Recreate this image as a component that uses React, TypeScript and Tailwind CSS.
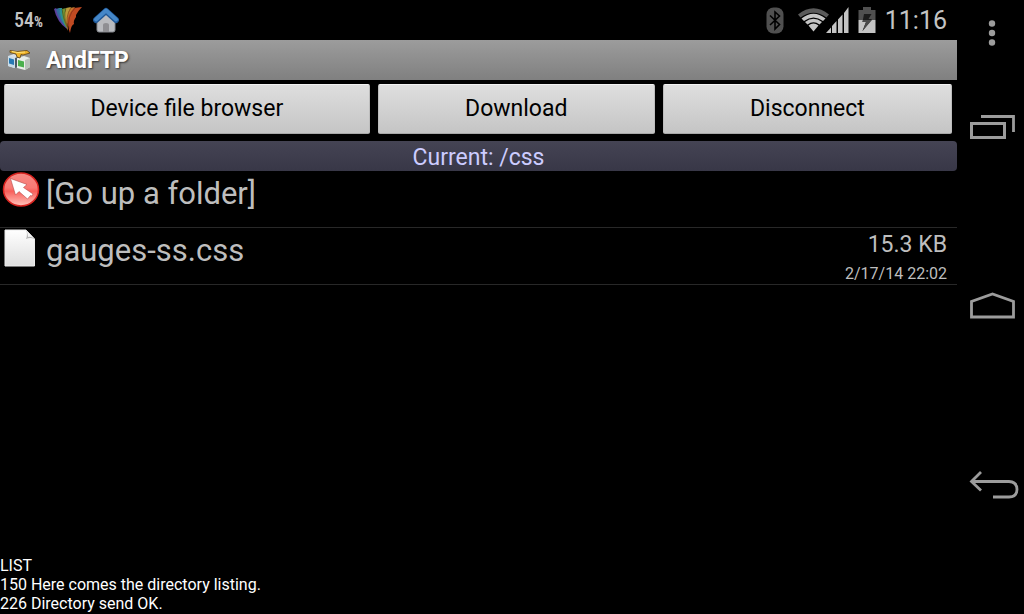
import type { ReactNode } from "react";

function BirdIcon() {
  return (
    <svg width="28" height="27" viewBox="0 0 28 27" aria-hidden="true">
      <path d="M0 2 L2 1 Q7 9 13 20 L13 22 Q3 15 0 2Z" fill="#5c3f9c" />
      <path d="M2 2 L5 1 Q8 9 13 20 L11 19 Q4 12 2 2Z" fill="#35699f" />
      <path d="M5 1 L8 1 Q9 10 13 21 L11 19 Q6 11 5 1Z" fill="#2b8f92" />
      <path d="M8 2 L12 1 Q10 11 14 22 L12 20 Q8 11 8 2Z" fill="#6f9434" />
      <path d="M12 1 L17 0 Q11 10 14 23 L13 21 Q9 11 12 1Z" fill="#b99b3a" />
      <path d="M16 1 L21 0 Q12 10 14 24 L13 21 Q11 9 16 1Z" fill="#c8782c" />
      <path d="M20 1 L28 0 Q24 4 22 8 L22 10 Q19 14 20 17 Q17 18 16 26 Q10 10 20 1Z" fill="#c04a22" />
      <path d="M8 2 Q9 11 13 20 M12 1 Q9 10 14 21 M17 1 Q11 9 14 22 M21 1 Q13 9 15 22" fill="none" stroke="#1a1208" strokeOpacity="0.5" strokeWidth="0.6" />
    </svg>
  );
}

function HouseIcon() {
  return (
    <svg width="26" height="26" viewBox="0 0 26 26" aria-hidden="true">
      <path d="M4 12 L13 4 L22 12 V23 Q22 25 20 25 H6 Q4 25 4 23Z" fill="#b9bbbf" stroke="#85888e" />
      <path d="M10 25 V18 Q10 16 13 16 Q16 16 16 18 V25Z" fill="#8f8f93" />
      <path d="M3 13 L13 4 L23 13" fill="none" stroke="#1f5796" strokeWidth="6" strokeLinecap="round" strokeLinejoin="round" />
      <path d="M3 12.5 L13 3.5 L23 12.5" fill="none" stroke="#4587c8" strokeWidth="4" strokeLinecap="round" strokeLinejoin="round" />
    </svg>
  );
}

function BluetoothIcon() {
  return (
    <svg width="18" height="27" viewBox="0 0 18 27" aria-hidden="true">
      <rect x="0.5" y="0.5" width="17" height="26" rx="7" fill="#505050" />
      <path d="M4 8.5 L13.5 17.5 L9 22 V5 L13.5 9 L4 18" fill="none" stroke="#000" strokeWidth="1.6" />
    </svg>
  );
}

function WifiIcon() {
  return (
    <svg width="32" height="24" viewBox="0 0 32 24" aria-hidden="true">
      <path d="M0 6.5 Q15.5 -6 31 6.5 L28.5 9.5 Q15.5 0 2.5 9.5Z" fill="#5a5a5a" />
      <path d="M3.5 10.5 Q15.5 1 27.5 10.5 L25 13 Q15.5 6 6 13Z" fill="#c4c4c4" />
      <path d="M7 14 Q15.5 7.5 24 14 L21.5 16.5 Q15.5 12 9.5 16.5Z" fill="#c4c4c4" />
      <path d="M10.5 17.5 Q15.5 13.5 20.5 17.5 L15.5 23.5Z" fill="#c4c4c4" />
    </svg>
  );
}

function SignalIcon() {
  return (
    <svg width="23" height="26" viewBox="0 0 23 26" aria-hidden="true">
      <path d="M0 26 L5 20.500 V26Z M6 26 V19 L10.500 14 V26Z M12 26 V12.500 L16.500 7.500 V26Z M18 26 V6 L22.500 0 V26Z" fill="#c4c4c4" />
    </svg>
  );
}

function BatteryIcon() {
  return (
    <svg width="18" height="26" viewBox="0 0 18 26" aria-hidden="true">
      <path d="M5 0 H13 V3 H17.500 V13 H0.500 V3 H5Z" fill="#505050" />
      <path d="M0.500 13 H17.500 V26 H0.500Z" fill="#c4c4c4" />
      <path d="M6 7 L13.500 7 L10.500 12 H14 L4.500 24 L8 15 H4.500Z" fill="#1c1c1c" />
      <path d="M9 13 H14 L4.500 24 L8 15 H4.500 L5 13Z" fill="#4a4a4a" />
    </svg>
  );
}

function AndFtpIcon() {
  return (
    <svg width="24" height="22" viewBox="0 0 24 22" aria-hidden="true">
      <path d="M1 7 L7 5 L13 7 V17 L7 19 L1 17Z" fill="#d9e0e6" />
      <path d="M1 7 L8 9 V19 L1 17Z" fill="#c9dce8" />
      <path d="M2 9 L7 10.5 V16 L2 14.5Z" fill="#2779b4" />
      <path d="M8 9 L13 7 V17 L8 19Z" fill="#4d5a64" />
      <path d="M10 9 L17 7 L23 9 V18 L18 21 L10 19Z" fill="#e8eee8" />
      <path d="M18 11 L23 9 V18 L18 21Z" fill="#b9c1bb" />
      <path d="M11 11 L17 12.5 V18.5 L11 17Z" fill="#49b04d" />
      <path d="M3 1.500 L10 2.500 L20 1.500 L23 4 L16 6 L14 5.500 L13 9 L10 8 L9 5 L3 3.500Z" fill="#f0b429" stroke="#5e430f" strokeWidth="0.8" />
      <path d="M5 2.500 L11 3.500 L18 3" fill="none" stroke="#ffe37a" />
    </svg>
  );
}

function GoUpIcon() {
  return (
    <svg width="38" height="36" viewBox="0 0 38 36" aria-hidden="true">
      <defs>
        <linearGradient id="ball" x1="0" y1="0" x2="0" y2="1">
          <stop offset="0" stopColor="#f58a84" />
          <stop offset="0.45" stopColor="#f87974" />
          <stop offset="0.55" stopColor="#f85f5a" />
          <stop offset="1" stopColor="#ffc4bc" />
        </linearGradient>
      </defs>
      <ellipse cx="19" cy="17.5" rx="17.5" ry="16.5" fill="url(#ball)" stroke="#d92420" strokeWidth="1.5" />
      <path d="M8.5 6.5 L25 12.500 L21.5 15.500 L31 22 L30 24 L28.500 23.500 L25.500 27 L17 19.500 L13.5 23Z" fill="#fff" stroke="#a83a38" strokeWidth="0.5" />
    </svg>
  );
}

function FileIcon() {
  return (
    <svg width="32" height="38" viewBox="0 0 32 38" aria-hidden="true">
      <defs>
        <linearGradient id="sheet" x1="0" y1="0" x2="0" y2="1">
          <stop offset="0" stopColor="#fff" />
          <stop offset="1" stopColor="#dedede" />
        </linearGradient>
      </defs>
      <path d="M1 1 H22 L30.5 10 V37 H1Z" fill="url(#sheet)" stroke="#ececec" />
      <path d="M22 1 L30.5 10 Q26 8 22 10 Q24 5 22 1Z" fill="#b4b4b4" />
      <path d="M22 1 L30.5 10 Q27 7 24 8 Q24 4 22 1Z" fill="#f4f4f4" />
    </svg>
  );
}

function BarButton({ children, className }: { children: ReactNode; className: string }) {
  return (
    <button
      type="button"
      className={`h-[50px] min-w-0 rounded-xs border border-x-[#bdbdbd] border-t-[#f2f2f2] border-b-[#a8a8a8] bg-linear-to-b from-[#dedede] to-[#c5c5c5] text-[23px] text-black ${className}`}
    >
      {children}
    </button>
  );
}

export default function App() {
  return (
    <div className="flex min-h-screen bg-black font-[Roboto,sans-serif] text-[#bebebe]">
      <main className="flex min-w-0 flex-1 flex-col">
        <header className="flex h-10 items-center pr-[10px] pl-[14px]">
          <span className="w-10 font-[Roboto_Condensed,Roboto,sans-serif] text-xl font-medium text-[#c4c4c4]">
            54<span className="text-sm font-bold">%</span>
          </span>
          <BirdIcon />
          <span className="ml-[11px]">
            <HouseIcon />
          </span>
          <div className="ml-auto flex items-center">
            <BluetoothIcon />
            <span className="ml-[14px]">
              <WifiIcon />
            </span>
            <span className="-ml-1">
              <SignalIcon />
            </span>
            <span className="mr-[9px] ml-[9px]">
              <BatteryIcon />
            </span>
            <time className="pt-px text-[25px] leading-10 text-[#c4c4c4]">11:16</time>
          </div>
        </header>

        <div className="flex h-10 items-center gap-[15px] bg-linear-to-b from-[#9c9c9c] to-[#808080] pl-[7px]">
          <AndFtpIcon />
          <h1 className="pt-0.5 text-[23px] font-bold text-white [text-shadow:1px_1px_2px_#333]">AndFTP</h1>
        </div>

        <div className="flex gap-2 pt-1 pr-[5px] pb-[7px] pl-1">
          <BarButton className="flex-[366]">Device file browser</BarButton>
          <BarButton className="flex-[277]">Download</BarButton>
          <BarButton className="flex-[289]">Disconnect</BarButton>
        </div>

        <p className="h-[30px] rounded-sm bg-linear-to-b from-[#454454] to-[#383747] text-center text-[23px] leading-[34px] text-[#ccccff]">
          Current: /css
        </p>

        <ul>
          <li className="flex h-[57px] items-start border-b border-[#282828] pt-px pr-[10px] pl-[2px]">
            <GoUpIcon />
            <a href="#up" className="ml-[6px] text-[31px] leading-[43px]">[Go up a folder]</a>
          </li>
          <li className="flex h-[57px] items-start border-b border-[#282828] pt-px pr-[10px] pl-1">
            <FileIcon />
            <a href="#gauges-ss.css" className="ml-[10px] text-[31px] leading-[43px]">gauges-ss.css</a>
            <div className="ml-auto text-right">
              <p className="text-[23px] leading-8">15.3 KB</p>
              <p className="text-base leading-[26px]">2/17/14 22:02</p>
            </div>
          </li>
        </ul>

        <div className="mt-auto pb-px text-base leading-[19px] text-white">
          <p>LIST</p>
          <p>150 Here comes the directory listing.</p>
          <p>226 Directory send OK.</p>
        </div>
      </main>

      <nav className="flex w-[67px] flex-col pt-[18px]">
        <button type="button" aria-label="Menu" className="flex h-[30px] items-center justify-center pl-[3px] text-[#9c9c9c]">
          <svg width="8" height="26" viewBox="0 0 8 26" fill="currentColor">
            <circle cx="4" cy="3.5" r="3.2" />
            <circle cx="4" cy="13" r="3.2" />
            <circle cx="4" cy="22.5" r="3.2" />
          </svg>
        </button>
        <div className="flex flex-1 flex-col justify-between pt-[59px] pb-[109px] text-[#9c9c9c]">
          <button type="button" aria-label="Recent apps" className="flex h-10 items-center pl-[13px]">
            <svg width="46" height="24" viewBox="0 0 46 24" fill="none" stroke="currentColor">
              <path d="M1.5 8.5 H34.5 V22.5 H1.5Z" strokeWidth="3" />
              <path d="M11 1.5 H43.5 V17" strokeWidth="2.8" />
            </svg>
          </button>
          <button type="button" aria-label="Home" className="flex h-10 items-center pl-[13px]">
            <svg width="46" height="28" viewBox="0 0 46 28" fill="none" stroke="currentColor" strokeWidth="2.8">
              <path d="M1.5 25 V9.5 L22.5 2 L43.5 9.5 V25Z" />
            </svg>
          </button>
          <button type="button" aria-label="Back" className="flex h-10 items-center pl-3">
            <svg width="50" height="28" viewBox="0 0 50 28" fill="none" stroke="currentColor" strokeWidth="2.8">
              <path d="M3 10.5 H40 Q48 11 48 18.5 Q48 26 40 26 H24" />
              <path d="M12 1 L2.5 10.5 L12 19.5" />
            </svg>
          </button>
        </div>
      </nav>
    </div>
  );
}
